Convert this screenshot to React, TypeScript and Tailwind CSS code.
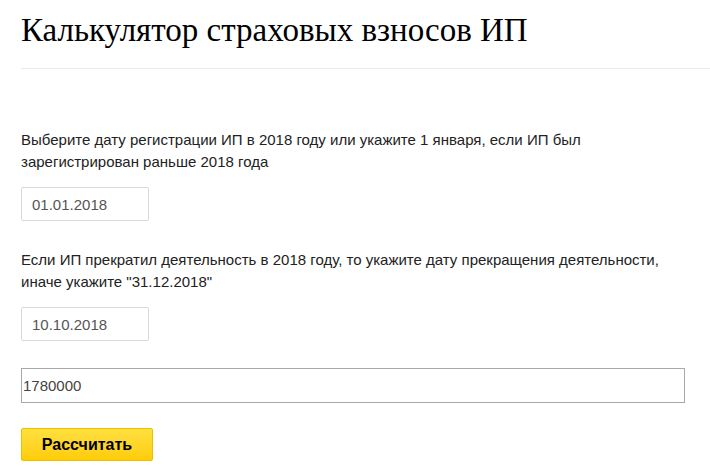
export default function App() {
  return (
    <div className="min-h-[472px] bg-white pl-[21px] font-['Liberation_Sans',Arial,sans-serif] text-[15px] text-[#222]">
      <h1 className="pt-[12px] pb-[20px] font-['Liberation_Serif','Times_New_Roman',serif] text-[33px] leading-[36px] text-black">
        Калькулятор страховых взносов ИП
      </h1>
      <div className="h-px bg-[#ebebeb]" />

      <div className="w-[672px] pt-[60px]">
        <p className="leading-[22px]">
          Выберите дату регистрации ИП в 2018 году или укажите 1 января, если ИП был зарегистрирован раньше 2018 года
        </p>
        <input
          defaultValue="01.01.2018"
          className="mt-[14px] block h-[34px] w-[128px] rounded-[2px] border border-[#d9d9d9] px-[10px] text-[15px] text-[#555] outline-none"
        />

        <p className="mt-[28px] leading-[22px]">
          Если ИП прекратил деятельность в 2018 году, то укажите дату прекращения деятельности, иначе укажите "31.12.2018"
        </p>
        <input
          defaultValue="10.10.2018"
          className="mt-[14px] block h-[34px] w-[128px] rounded-[2px] border border-[#d9d9d9] px-[10px] text-[15px] text-[#555] outline-none"
        />

        <input
          defaultValue="1780000"
          className="mt-[27px] block h-[35px] w-[664px] border border-[#a9a9a9] px-[1px] text-[15px] text-[#444] outline-none"
        />

        <button className="mt-[25px] block h-[33px] w-[132px] rounded-[2px] border border-[#e8c200] bg-gradient-to-b from-[#ffe03d] to-[#ffcc00] text-[16px] font-bold text-black">
          Рассчитать
        </button>
      </div>
    </div>
  );
}
